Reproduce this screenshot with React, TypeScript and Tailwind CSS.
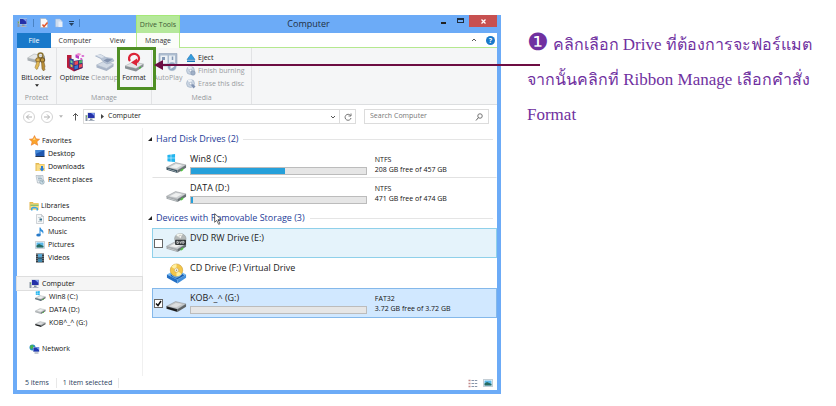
import { useState } from "react";
import type { ReactNode } from "react";

type IconProps = { className?: string };

function PcIcon({ className = "w-[11px] h-[10px]" }: IconProps) {
  return (
    <svg viewBox="0 0 22 20" className={className}>
      <path d="M1 6h4v12H1z" fill="#8d98a5" />
      <path d="M2 8h2v2H2z" fill="#62c04a" />
      <path d="M5 1h15v12H5z" fill="#c3cad6" />
      <path d="M6 2h13v10H6z" fill="#2431a8" />
      <path d="M12 2h7v6z" fill="#7d9cf0" />
      <path d="M10 13h5v3h-5z" fill="#8590a0" />
      <path d="M7 16h12v2H7z" fill="#a9b2c0" />
    </svg>
  );
}

function StarIcon() {
  return (
    <svg viewBox="0 0 20 20" className="w-[11px] h-[11px]">
      <path
        d="M10 1l2.800 6 6.500.7-4.900 4.400 1.500 6.600L10 15.300l-5.900 3.400 1.500-6.600L.7 7.700l6.500-.7z"
        fill="#fba52c"
        stroke="#e8742a"
      />
      <path d="M10 4l1.800 4.500L7 9z" fill="#ffd978" />
    </svg>
  );
}

function DesktopIcon() {
  return (
    <svg viewBox="0 0 20 18" className="w-[10px] h-[9px]">
      <path d="M1 2h18v13H1z" fill="#1f58b0" />
      <path d="M1 2h18L1 10z" fill="#4287d6" />
      <path d="M1 14h18v2H1z" fill="#26364d" />
    </svg>
  );
}

function FolderIcon({ library = false }: { library?: boolean }) {
  return (
    <svg viewBox="0 0 20 20" className="w-[10px] h-[10px]">
      <path d="M1 2h7l1 2h10v14H1z" fill="#e3b851" />
      <path d="M3 5h16v13H3z" fill="#f9dc85" />
      {library ? (
        <>
          <path d="M3 7h16v3H3z" fill="#8fc16a" />
          <path d="M4 19v-5q5-5 14 0v5h-3v-4H7v4z" fill="#3ba3e0" />
        </>
      ) : (
        <path d="M12 8h4v5h3l-5 6-5-6h3z" fill="#2b7fd6" />
      )}
    </svg>
  );
}

function RecentIcon() {
  return (
    <svg viewBox="0 0 20 20" className="w-[10px] h-[10px]">
      <path d="M2 1h14l1 15H5z" fill="#e7edf1" stroke="#8e9aa5" />
      <path d="M5 4h8M6 7h8M6 10h5" stroke="#8aa3b5" strokeWidth="1.500" />
      <circle cx="14" cy="14" r="4.500" fill="#cbdfe9" stroke="#758895" />
      <path d="M14 11v3h2" stroke="#56707f" fill="none" />
    </svg>
  );
}

function DocumentIcon() {
  return (
    <svg viewBox="0 0 20 20" className="w-[10px] h-[10px]">
      <path d="M3 1h10l4 4v14H3z" fill="#f5f7f8" stroke="#a2abb2" />
      <path d="M13 1v4h4M6 7h6M6 15h8" stroke="#a2abb2" fill="none" />
      <path d="M9 9h5v4H9z" fill="#36708c" />
    </svg>
  );
}

function MusicIcon() {
  return (
    <svg viewBox="0 0 20 20" className="w-[10px] h-[10px]">
      <path d="M9 1h2q1 4 5 6 2 3 0 7 0-4-5-6v8H9z" fill="#2f8edb" />
      <ellipse cx="7" cy="16" rx="4.500" ry="3.200" fill="#2879c8" />
    </svg>
  );
}

function PictureIcon() {
  return (
    <svg viewBox="0 0 20 16" className="w-[10px] h-[8px]">
      <path d="M1 1h18v14H1z" fill="#fff" stroke="#9ba6ae" />
      <path d="M3 3h14v10H3z" fill="#59b7e8" />
      <path d="M3 9l5-3 9 4v3H3z" fill="#286b62" />
    </svg>
  );
}

function VideoIcon() {
  return (
    <svg viewBox="0 0 20 20" className="w-[10px] h-[10px]">
      <path d="M2 1h16v18H2z" fill="#343c43" />
      <path d="M6 2h8v7H6z" fill="#58a7d5" />
      <path d="M6 11h8v7H6z" fill="#3b86ad" />
      <path d="M4 2v16M16 2v16" stroke="#c9d0d5" strokeDasharray="2 2" strokeWidth="1.500" />
    </svg>
  );
}

function NetworkIcon() {
  return (
    <svg viewBox="0 0 22 20" className="w-[11px] h-[10px]">
      <circle cx="7" cy="7" r="6" fill="#2a8fc6" />
      <path d="M3 3l5-1 1 4-4 5-3-4z" fill="#49b449" />
      <path d="M8 6h13v10H8z" fill="#b9c3d4" />
      <path d="M9 7h11v8H9z" fill="#1c37b4" />
      <path d="M14 7h6v5z" fill="#789cf1" />
      <path d="M11 17h8v2h-8z" fill="#8691a5" />
    </svg>
  );
}

type DriveKind = "windows" | "plain" | "black" | "dvd" | "cd";

function DriveIcon({ kind, className }: { kind: DriveKind; className: string }) {
  if (kind === "cd") {
    return (
      <svg viewBox="0 0 44 44" className={className}>
        <path d="M2 24l20-11 20 11-18 12z" fill="#73b8f0" />
        <path d="M2 24l22 11v8L2 31z" fill="#236fc4" />
        <path d="M42 24L24 35v8l18-12z" fill="#438fda" />
        <path d="M10 23q12 16 24 0l4 3-14 8-14-7z" fill="#1d5aaa" />
        <circle cx="22" cy="15" r="13" fill="#f3c64a" stroke="#bd8c21" />
        <path d="M22 15L11 8q5-6 11-6zM22 15l11 8q-4 5-11 5z" fill="#fff0a1" />
        <circle cx="22" cy="15" r="4.500" fill="#f4f4e9" stroke="#c4973b" />
        <circle cx="22" cy="15" r="1.500" fill="#9f8b58" />
      </svg>
    );
  }
  const dark = kind === "black";
  const side = kind === "windows" ? "#3f5663" : "#a3a8ab";
  return (
    <svg viewBox="0 0 44 44" className={className}>
      {kind === "dvd" && (
        <>
          <ellipse cx="30" cy="12" rx="12" ry="11" fill="#b4b9b8" stroke="#858a8a" />
          <path d="M30 12L21 4q7-5 14-2z" fill="#f2f5ee" />
          <circle cx="30" cy="8" r="3" fill="#f7f7f7" stroke="#999" />
        </>
      )}
      <path d="M1 28L20 18l22 5-18 11z" fill={dark ? "#c3c6c8" : "#cdd0d2"} stroke="#878c8f" />
      <path d="M8 28l13-7 13 2-12 7z" fill={dark ? "#dcdedf" : "#eff0f0"} />
      <path d="M1 28l23 6v6L1 33z" fill={dark ? "#242729" : side} />
      <path d="M42 23L24 34v6l18-11z" fill={dark ? "#5f6466" : "#697175"} />
      <path d="M4 31l17 5v1L4 32z" fill={dark ? "#070808" : "#d3d7d9"} />
      {!dark && <path d="M31 33l5-3v4l-5 3z" fill="#4fc53c" />}
      {kind === "dvd" && (
        <>
          <rect x="19" y="14" width="23" height="11" rx="2" fill="#323638" />
          <path d="M23 17v5q5 0 4-3zM29 17l2 5 2-5M35 17v5q4 0 3-4z" stroke="#eee" strokeWidth="1.500" fill="none" />
        </>
      )}
      {kind === "windows" && (
        <path d="M3 2l7-1v7H3zM11 1l8-1v8h-8zM3 9h7v7l-7-1zM11 9h8v8l-8-1z" fill="#23b5ef" />
      )}
    </svg>
  );
}

function KeysIcon() {
  return (
    <svg viewBox="0 0 40 40" className="w-[20px] h-[20px]">
      <path d="M1 12L14 4l22 4-13 9z" fill="#e5e7e8" stroke="#a0a4a7" />
      <path d="M1 12l22 5v6L1 17z" fill="#a9afb3" />
      <path d="M36 8L23 17v6l13-9z" fill="#8f979c" />
      <circle cx="27" cy="7" r="5" fill="none" stroke="#8b7433" strokeWidth="3" />
      <circle cx="22" cy="16" r="4.500" fill="#d9b04e" stroke="#8b692d" strokeWidth="2" />
      <circle cx="31" cy="16" r="4.500" fill="#bd9740" stroke="#6e5327" strokeWidth="2" />
      <path d="M20 19l-4 12 3 4 3-2v-3l2-2 1-9z" fill="#e0b956" stroke="#8b692d" />
      <path d="M29 20l1 14 3 4 3-3-1-3 1-3-2-9z" fill="#b98e35" stroke="#6e5327" />
    </svg>
  );
}

function OptimizeIcon() {
  return (
    <svg viewBox="0 0 40 40" className="w-[20px] h-[20px]">
      <path d="M4 8l5-2v24l-5-2z" fill="#2c9c55" />
      <path d="M4 6h9v8h4v11l18-3v10l-17 7-14-8z" fill="#b81d3c" />
      <path d="M9 12l8 3v18l-8-4z" fill="#274da2" />
      <path d="M17 18l18-3v17l-17 6z" fill="#3c2a70" />
      <path d="M19 19l7-1v7l-7 1zM28 25l6-1v6l-6 2z" fill="#ed4b56" />
      <path d="M19 28l7-2v7l-7 2z" fill="#3876d5" />
      <path d="M28 17l6-1v6l-6 1z" fill="#4cb36e" />
      <path d="M11 16l4 2v5l-4-2z" fill="#75d58f" />
      <path d="M11 24l4 2v5l-4-2z" fill="#e7c84b" />
      <path d="M21 5l6-3 6 2-5 4z" fill="#f08bd0" />
      <path d="M21 5l7 3v6l-7-3z" fill="#b93ac2" />
      <path d="M32 8l4-2 3 2-3 2zM30 13l3-1 2 2-3 2z" fill="#d348c9" />
    </svg>
  );
}

function CleanupIcon() {
  return (
    <svg viewBox="0 0 40 40" className="w-[20px] h-[20px]">
      <path d="M3 26l14-7 20 5-14 9z" fill="#d2dae5" stroke="#9facbf" />
      <path d="M3 26l20 7v5L3 31zM37 24L23 33v5l14-9z" fill="#a8b4c7" />
      <path d="M1 8l10-3 11 6 13 2 3 5-14 6-8-5-5-6z" fill="#b7c3d5" stroke="#93a3bb" />
      <path d="M2 7l9-2 8 5-6 2z" fill="#dce3ec" />
      <path d="M17 17l7-4 11 2-10 6z" fill="#8292ae" />
    </svg>
  );
}

function FormatIcon() {
  return (
    <svg viewBox="0 0 40 40" className="w-[20px] h-[20px]">
      <path d="M2 28l16-8 21 4-15 9z" fill="#e4e6e7" stroke="#9da1a3" />
      <path d="M2 28l22 5v6L2 33zM39 24l-15 9v6l15-10z" fill="#899094" />
      <path d="M30 31l4-2v3l-4 2z" fill="#43bd36" />
      <path d="M12 18a10 9 0 1 1 12 3" fill="none" stroke="#dc2438" strokeWidth="4.500" />
      <path d="M14 21l12-8v15z" fill="#dc2438" />
    </svg>
  );
}

function AutoPlayIcon() {
  return (
    <svg viewBox="0 0 40 40" className="w-[20px] h-[20px]">
      <path d="M2 3h36v25H2z" fill="#adbdd0" stroke="#8497b1" />
      <path d="M5 7h14v16H5z" fill="#eef2f6" />
      <path d="M22 7h12v16H22z" fill="#e8eef4" />
      <path d="M8 10h6v6H8z" fill="#8298b6" />
      <path d="M29 9v7" stroke="#8298b6" strokeWidth="3" />
      <circle cx="28" cy="29" r="9" fill="#94a8c2" stroke="#e5eaf0" />
      <path d="M25 24l8 5-8 5z" fill="#f5f7fa" />
    </svg>
  );
}

function EjectIcon() {
  return (
    <svg viewBox="0 0 20 20" className="w-[10px] h-[10px]">
      <path d="M10 2l8 11H2z" fill="#329ddf" stroke="#1567a6" />
      <path d="M2 15h16v3H2z" fill="#1679bd" />
    </svg>
  );
}

function DiscIcon({ erase = false }: { erase?: boolean }) {
  return (
    <svg viewBox="0 0 20 20" className="w-[10px] h-[10px]">
      <circle cx="9" cy="9" r="8" fill="#c9d4e2" stroke="#92a4bb" />
      <path d="M9 9L3 3q5-4 9-1z" fill="#eef2f7" />
      <circle cx="9" cy="9" r="2.500" fill="#f8fafb" stroke="#8799b2" />
      {erase ? (
        <path d="M10 12l4-2 5 5-4 4z" fill="#8294b3" />
      ) : (
        <circle cx="14" cy="14" r="4.500" fill="#a0b0c7" stroke="#7b8ea9" />
      )}
    </svg>
  );
}

function Chevron({ up = false }: { up?: boolean }) {
  return (
    <svg viewBox="0 0 12 8" className="w-[6px] h-[4px]">
      <path d={up ? "M2 6l4-4 4 4" : "M2 2l4 4 4-4"} fill="none" stroke="#555" strokeWidth="2" />
    </svg>
  );
}

function Caret({ className = "w-[5px] h-[3px]" }: IconProps) {
  return (
    <svg viewBox="0 0 10 6" className={className}>
      <path d="M0 0h10L5 6z" fill="currentColor" />
    </svg>
  );
}

function TitleBar() {
  return (
    <header className="flex h-[18px] items-start">
      <div className="flex w-[119px] shrink-0 items-center gap-[5px] pt-[3px] text-[#24415f]">
        <PcIcon />
        <span className="h-2 w-px bg-[#4a83c4]"></span>
        <button aria-label="Properties">
          <svg viewBox="0 0 20 20" className="w-[10px] h-[10px]">
            <path d="M3 1h10l4 4v14H3z" fill="#f8f8f8" stroke="#a8a8a8" />
            <path d="M7 13l3 4 7-8" fill="none" stroke="#e4572b" strokeWidth="3" />
          </svg>
        </button>
        <button aria-label="New folder">
          <svg viewBox="0 0 20 20" className="w-[10px] h-[10px]">
            <path d="M3 2h9l3 3v13H3z" fill="#cddcee" stroke="#9cb7d8" />
            <path d="M9 7h8v11H9z" fill="#e8eff8" />
          </svg>
        </button>
        <button aria-label="Customize toolbar" className="flex flex-col gap-px">
          <span className="h-px w-[5px] bg-[#24415f]"></span>
          <Caret />
        </button>
        <span className="h-2 w-px bg-[#4a83c4]"></span>
      </div>
      <div className="h-full w-[44px] shrink-0 border-x border-t border-[#a5e878] bg-[#b5e89b] text-center text-[7px] leading-[18px] text-[#3d5a35]">
        Drive Tools
      </div>
      <h1 className="flex-1 pl-[2px] text-center text-[9px] leading-[17px] text-[#1f2f42]">Computer</h1>
      <div className="flex items-start">
        <button aria-label="Minimize" className="flex h-[11px] w-4 items-center justify-center">
          <span className="mt-1 h-[2px] w-[5px] bg-[#222]"></span>
        </button>
        <button aria-label="Maximize" className="flex h-[11px] w-[18px] items-center justify-center">
          <span className="h-[5px] w-[7px] border border-t-2 border-[#1f2d3f]"></span>
        </button>
        <button aria-label="Close" className="flex h-[12px] w-[28px] items-center justify-center bg-[#c75050]">
          <svg viewBox="0 0 10 10" className="w-[5px] h-[5px]">
            <path d="M1 1l8 8M9 1L1 9" stroke="#fff" strokeWidth="2.500" />
          </svg>
        </button>
      </div>
    </header>
  );
}

function RibbonTabs() {
  return (
    <div className="flex h-[15px] bg-white text-center text-[7px] leading-[15px] text-[#333]">
      <button className="w-[34px] bg-[#1979ca] text-white">File</button>
      <button className="w-[48px] border-b border-[#e3e4e6]">Computer</button>
      <button className="w-[37px] border-b border-[#e3e4e6]">View</button>
      <button className="w-[44px] border-x border-[#b5e88f] bg-[#fbfdf9]">Manage</button>
      <div className="flex flex-1 items-center justify-end gap-[9px] border-b border-[#b5e88f] pr-[2px]">
        <button aria-label="Minimize the ribbon">
          <Chevron up />
        </button>
        <button
          aria-label="Help"
          className="h-[9px] w-[9px] rounded-full bg-[#1979ca] text-[7px] leading-[9px] font-bold text-white"
        >
          ?
        </button>
      </div>
    </div>
  );
}

type RibbonButtonProps = {
  icon: ReactNode;
  label: string;
  width: string;
  disabled?: boolean;
  menu?: boolean;
};

function RibbonButton({ icon, label, width, disabled, menu }: RibbonButtonProps) {
  return (
    <button
      disabled={disabled}
      className={`flex flex-col items-center pt-[4px] whitespace-nowrap ${width} ${
        disabled ? "text-[#9a9da2]" : "text-[#222]"
      }`}
    >
      {icon}
      <span className="mt-px leading-[10px]">{label}</span>
      {menu && <Caret className="mt-px w-[4px] h-[3px]" />}
    </button>
  );
}

function RibbonGroup({ title, className, children }: { title: string; className: string; children: ReactNode }) {
  return (
    <section className={`flex flex-col border-r border-[#e2e3e5] ${className}`}>
      <div className="flex flex-1 items-start justify-center">{children}</div>
      <h2 className="text-center leading-[12px] text-[#94979b]">{title}</h2>
    </section>
  );
}

function Ribbon() {
  return (
    <div className="flex h-[57px] border-b border-[#dcdee0] bg-[#f5f6f7] text-[7px]">
      <RibbonGroup title="Protect" className="w-[40px]">
        <RibbonButton icon={<KeysIcon />} label="BitLocker" width="w-[38px]" menu />
      </RibbonGroup>
      <RibbonGroup title="Manage" className="w-[95px]">
        <RibbonButton icon={<OptimizeIcon />} label="Optimize" width="w-[31px]" />
        <RibbonButton icon={<CleanupIcon />} label="Cleanup" width="w-[29px]" disabled />
        <div className="relative">
          <RibbonButton icon={<FormatIcon />} label="Format" width="w-[30px]" />
          <div className="absolute -top-px -left-[2px] h-[43px] w-[39px] border-3 border-[#4f8f24]"></div>
        </div>
      </RibbonGroup>
      <RibbonGroup title="Media" className="w-[100px]">
        <RibbonButton icon={<AutoPlayIcon />} label="AutoPlay" width="w-[32px]" disabled />
        <div className="flex flex-1 flex-col gap-[3px] pt-[5px] pl-[2px] *:flex *:items-center *:gap-[2px] *:leading-[10px] *:whitespace-nowrap">
          <button className="text-[#222]">
            <EjectIcon />
            Eject
          </button>
          <button disabled className="text-[#9a9da2]">
            <DiscIcon />
            Finish burning
          </button>
          <button disabled className="text-[#9a9da2]">
            <DiscIcon erase />
            Erase this disc
          </button>
        </div>
      </RibbonGroup>
    </div>
  );
}

function RoundArrow({ flip = false }: { flip?: boolean }) {
  return (
    <svg viewBox="0 0 24 24" className={`w-[12px] h-[12px] ${flip ? "rotate-180" : ""}`}>
      <circle cx="12" cy="12" r="11" fill="none" stroke="#c3c3c3" strokeWidth="1.500" />
      <path d="M18 12H7M12 7l-5 5 5 5" fill="none" stroke="#b0b0b0" strokeWidth="2" />
    </svg>
  );
}

function AddressBar() {
  const [query, setQuery] = useState("");

  return (
    <div className="flex h-[23px] items-center pr-2 pl-[6px] text-[7px] text-[#222]">
      <button aria-label="Back" className="mr-[6px]">
        <RoundArrow />
      </button>
      <button aria-label="Forward" className="mr-[6px]">
        <RoundArrow flip />
      </button>
      <button aria-label="Recent locations" className="mr-[9px] text-[#b5b5b5]">
        <Caret className="w-[4px] h-[3px]" />
      </button>
      <button aria-label="Up" className="mr-[4px]">
        <svg viewBox="0 0 14 18" className="w-[7px] h-[9px]">
          <path d="M7 17V3M2 8l5-5 5 5" fill="none" stroke="#555" strokeWidth="2" />
        </svg>
      </button>
      <div className="flex h-[15px] flex-1 items-center border border-[#dcdcdc] pl-px">
        <PcIcon />
        <svg viewBox="0 0 6 10" className="mr-[4px] ml-[5px] w-[3px] h-[5px]">
          <path d="M0 0v10l6-5z" fill="#444" />
        </svg>
        <span className="flex-1">Computer</span>
        <button aria-label="Previous locations" className="mr-[3px]">
          <Chevron />
        </button>
        <button aria-label="Refresh" className="flex h-full w-4 items-center justify-center border-l border-[#dcdcdc]">
          <svg viewBox="0 0 16 16" className="w-[8px] h-[8px]">
            <path d="M13 5a6 6 0 1 0 1 5M14 1v5H9" fill="none" stroke="#666" strokeWidth="1.800" />
          </svg>
        </button>
      </div>
      <label className="ml-2 flex h-[15px] w-[125px] items-center border border-[#dcdcdc] px-[5px]">
        <input
          aria-label="Search Computer"
          placeholder="Search Computer"
          value={query}
          onChange={(e) => setQuery(e.target.value)}
          className="min-w-0 flex-1 outline-none placeholder:text-[#777]"
        />
        <svg viewBox="0 0 16 16" className="w-[8px] h-[8px]">
          <circle cx="10" cy="6" r="4.500" fill="none" stroke="#666" strokeWidth="1.800" />
          <path d="M7 9l-5 6" stroke="#666" strokeWidth="2" />
        </svg>
      </label>
    </div>
  );
}

const smallDrive = "w-[11px] h-[11px]";

const tree = [
  {
    label: "Favorites",
    icon: <StarIcon />,
    items: [
      { label: "Desktop", icon: <DesktopIcon /> },
      { label: "Downloads", icon: <FolderIcon /> },
      { label: "Recent places", icon: <RecentIcon /> },
    ],
  },
  {
    label: "Libraries",
    icon: <FolderIcon library />,
    items: [
      { label: "Documents", icon: <DocumentIcon /> },
      { label: "Music", icon: <MusicIcon /> },
      { label: "Pictures", icon: <PictureIcon /> },
      { label: "Videos", icon: <VideoIcon /> },
    ],
  },
  {
    label: "Computer",
    icon: <PcIcon />,
    selected: true,
    items: [
      { label: "Win8 (C:)", icon: <DriveIcon kind="windows" className={smallDrive} /> },
      { label: "DATA (D:)", icon: <DriveIcon kind="plain" className={smallDrive} /> },
      { label: "KOB^_^ (G:)", icon: <DriveIcon kind="black" className={smallDrive} /> },
    ],
  },
  { label: "Network", icon: <NetworkIcon />, items: [] },
];

function NavigationPane() {
  return (
    <nav className="flex w-[126px] shrink-0 flex-col gap-[13px] border-r border-[#f0f0f0] pt-[6px] pb-[21px] text-[7px] leading-[13px] text-[#111]">
      {tree.map((group) => (
        <ul key={group.label}>
          <li>
            <a
              href="#"
              className={`flex items-center gap-[2px] pl-[12px] ${
                group.selected ? "bg-[#f5f5f5] outline outline-[#dedede]" : ""
              }`}
            >
              {group.icon}
              {group.label}
            </a>
          </li>
          {group.items.map((item) => (
            <li key={item.label}>
              <a href="#" className="flex items-center gap-[3px] pl-[18px]">
                {item.icon}
                {item.label}
              </a>
            </li>
          ))}
        </ul>
      ))}
    </nav>
  );
}

type Drive = {
  name: string;
  kind: DriveKind;
  used?: number;
  fs?: string;
  free?: string;
  state?: "hover" | "selected";
};

const hardDisks: Drive[] = [
  { name: "Win8 (C:)", kind: "windows", used: 54, fs: "NTFS", free: "208 GB free of 457 GB" },
  { name: "DATA (D:)", kind: "plain", used: 1, fs: "NTFS", free: "471 GB free of 474 GB" },
];

const removable: Drive[] = [
  { name: "DVD RW Drive (E:)", kind: "dvd", state: "hover" },
  { name: "CD Drive (F:) Virtual Drive", kind: "cd" },
  { name: "KOB^_^ (G:)", kind: "black", used: 0, fs: "FAT32", free: "3.72 GB free of 3.72 GB", state: "selected" },
];

const rowStyles = {
  none: "border-transparent",
  hover: "border-[#8fd0ea] bg-[#e5f3fb]",
  selected: "border-[#84b8ea] bg-[#d1e8ff]",
};

function DriveRow({ drive }: { drive: Drive }) {
  return (
    <li
      className={`grid grid-cols-[12px_24px_minmax(0,178fr)_minmax(0,130fr)] border pl-px ${
        rowStyles[drive.state ?? "none"]
      }`}
    >
      <div className="flex items-center">
        {drive.state && (
          <label className="relative flex">
            <input
              type="checkbox"
              aria-label={drive.name}
              defaultChecked={drive.state === "selected"}
              className="peer h-[9px] w-[9px] appearance-none border border-[#666] bg-white"
            />
            <svg viewBox="0 0 18 18" className="absolute inset-0 hidden w-[9px] h-[9px] peer-checked:block">
              <path d="M4 9l4 4 6-9" fill="none" stroke="#111" strokeWidth="3" />
            </svg>
          </label>
        )}
      </div>
      <DriveIcon kind={drive.kind} className="mt-[4px] w-[21px] h-[21px]" />
      <div>
        <p className="text-[9px] leading-[17px] whitespace-nowrap text-[#222]">{drive.name}</p>
        {drive.used !== undefined && (
          <div className="h-[8px] border border-[#bcbcbc] bg-[#e6e6e6]">
            <div className="h-full bg-[#26a0da]" style={{ width: `${drive.used}%` }}></div>
          </div>
        )}
      </div>
      <div className="pt-[5px] pl-[8px] text-[7px] leading-[10px] whitespace-nowrap text-[#111]">
        <p>{drive.fs}</p>
        <p>{drive.free}</p>
      </div>
    </li>
  );
}

function DriveGroup({ title, drives, divided }: { title: string; drives: Drive[]; divided?: boolean }) {
  return (
    <section>
      <h2 className="flex h-[20px] items-center pr-1 pl-[5px] text-[9px] text-[#1e3c98]">
        <svg viewBox="0 0 8 8" className="mr-[4px] w-[4px] h-[4px]">
          <path d="M8 0v8H0z" fill="#222" />
        </svg>
        {title}
        <span className="ml-[5px] h-px flex-1 bg-[#e5e5e5]"></span>
      </h2>
      <ul className={`ml-[9px] ${divided ? "*:h-[29px] *:first:border-b-[#e2e2e2]" : "*:h-[30px]"}`}>
        {drives.map((drive) => (
          <DriveRow key={drive.name} drive={drive} />
        ))}
      </ul>
    </section>
  );
}

function StatusBar() {
  return (
    <footer className="flex h-[14px] items-center pr-1 pl-2 text-[7px] text-[#2b4260]">
      <span className="border-r border-[#e8e8e8] pr-[7px]">5 items</span>
      <span className="border-r border-[#e8e8e8] px-[6px]">1 item selected</span>
      <div className="ml-auto flex items-center gap-[5px]">
        <button aria-label="Details view">
          <svg viewBox="0 0 20 18" className="w-[10px] h-[9px]">
            <path d="M1 3h4M1 9h4M1 15h4" stroke="#c28a8a" strokeWidth="3" />
            <path d="M7 3h12M7 9h12M7 15h12" stroke="#8795aa" strokeWidth="2" strokeDasharray="5 1.500" />
          </svg>
        </button>
        <button aria-label="Large icons view" className="bg-[#dcecf8]">
          <PictureIcon />
        </button>
      </div>
    </footer>
  );
}

function ExplorerWindow() {
  return (
    <div className="border-x-4 border-b-4 border-[#6cabf7] bg-[#6cabf7] font-['Open_Sans',sans-serif]">
      <TitleBar />
      <div className="bg-white">
        <RibbonTabs />
        <Ribbon />
        <AddressBar />
        <div className="flex">
          <NavigationPane />
          <main className="relative flex flex-1 flex-col gap-px pt-px">
            <DriveGroup title="Hard Disk Drives (2)" drives={hardDisks} divided />
            <DriveGroup title="Devices with Removable Storage (3)" drives={removable} />
            <svg viewBox="0 0 12 18" className="absolute top-[85px] left-[71px] w-[8px] h-[12px]">
              <path d="M1 1v13l3-3 3 6 2-1-3-6h5z" fill="#fff" stroke="#222" />
            </svg>
          </main>
        </div>
        <StatusBar />
      </div>
    </div>
  );
}

function Thai({ children }: { children: ReactNode }) {
  return (
    <span lang="th" className="text-[16px]">
      {children}
    </span>
  );
}

export default function App() {
  return (
    <div className="relative grid min-h-screen grid-cols-[minmax(0,488fr)_minmax(0,335fr)] items-start bg-white pt-[15px] pl-[13px]">
      <ExplorerWindow />
      <p className="pt-[12px] pl-[26px] font-['Liberation_Serif',serif] text-[17px] leading-[35px] whitespace-nowrap text-[#7030a0]">
        <span className="mr-[4px] font-['DejaVu_Sans',sans-serif] text-[24px] leading-none">❶</span>
        <Thai>คลิกเลือก</Thai> Drive <Thai>ที่ต้องการจะฟอร์แมต</Thai>
        <br />
        <Thai>จากนั้นคลิกที่</Thai> Ribbon Manage <Thai>เลือกคำสั่ง</Thai>
        <br />
        Format
      </p>
      <svg viewBox="0 0 386 10" className="absolute top-[60px] left-[154px] w-[386px] h-[10px]">
        <path d="M0 5l9-5v10z" fill="#6d0d43" />
        <path d="M8 5h378" stroke="#6d0d43" strokeWidth="2" />
      </svg>
    </div>
  );
}
